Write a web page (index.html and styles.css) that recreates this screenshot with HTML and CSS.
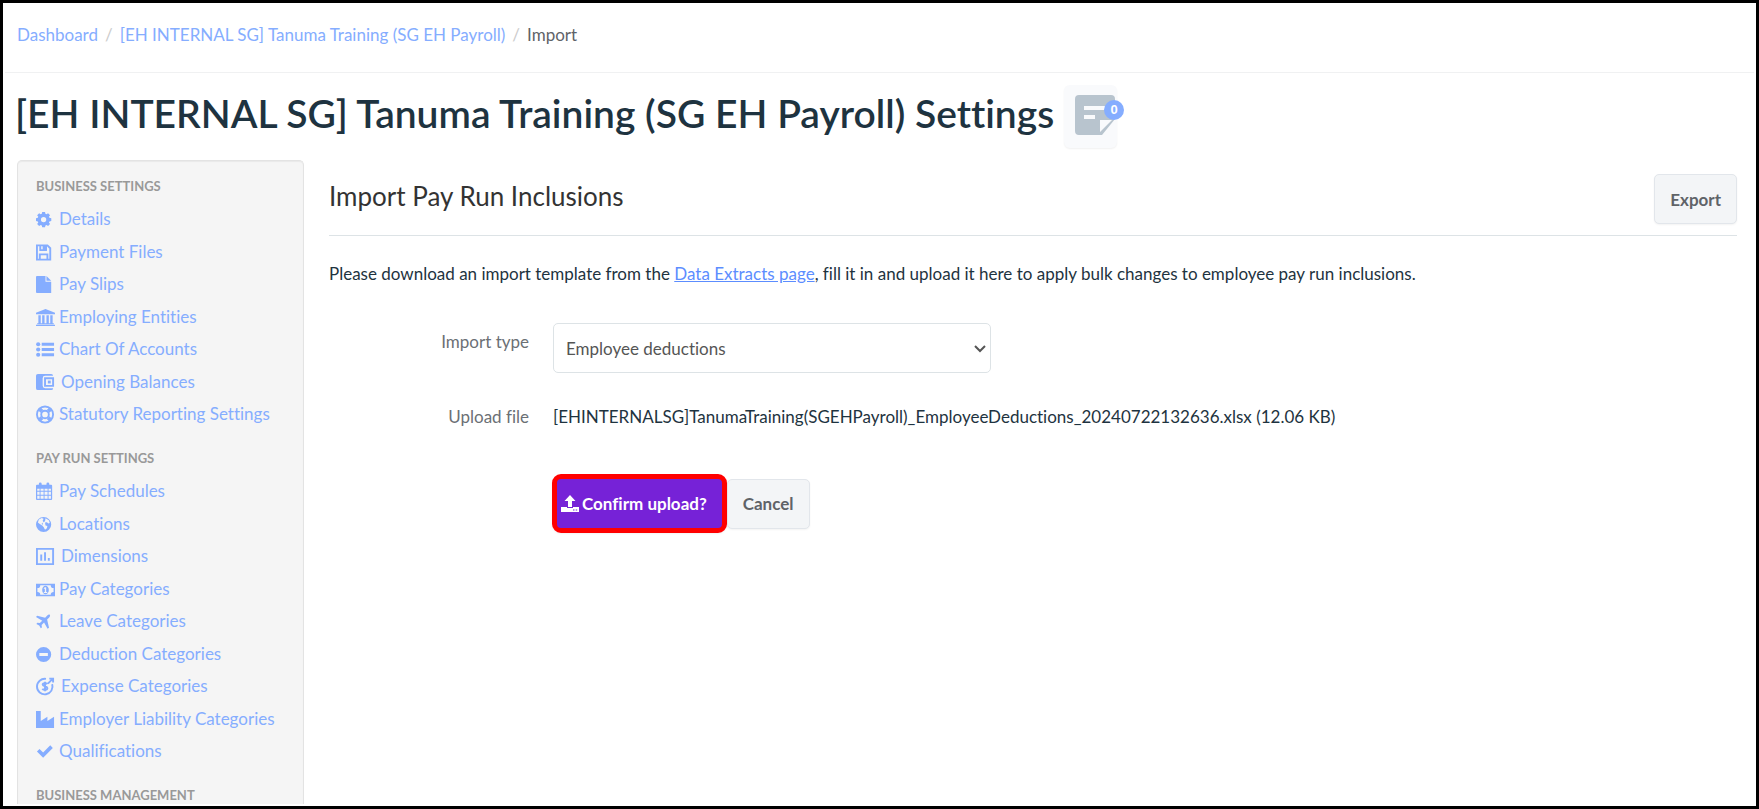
FILE: index.html
```html
<!DOCTYPE html>
<html lang="en">
<head>
    <meta charset="UTF-8">
    <meta name="viewport" content="width=device-width, initial-scale=1.0">
    <title>Import Pay Run Inclusions</title>
    <link rel="stylesheet" href="styles.css">
</head>
<body>
    <nav class="breadcrumb" aria-label="Breadcrumb">
        <a href="#">Dashboard</a>
        <span class="divider">/</span>
        <a href="#">[EH INTERNAL SG] Tanuma Training (SG EH Payroll)</a>
        <span class="divider">/</span>
        <span class="active">Import</span>
    </nav>

    <header class="page-header">
        <h1>[EH INTERNAL SG] Tanuma Training (SG EH Payroll) Settings</h1>
        <button type="button" class="notes-btn" aria-label="Notes">
            <svg viewBox="0 0 40 40"><path fill-rule="evenodd" d="M4 0h32a4 4 0 0 1 4 4v20L27 40H4a4 4 0 0 1-4-4V4a4 4 0 0 1 4-4zM9 11v4h22v-4zM9 20v4h11v-4zM25 25v12l12-12z"/></svg>
            <span class="notes-count">0</span>
        </button>
    </header>

    <div class="layout">
        <aside class="sidebar">
            <h2>Business Settings</h2>
            <ul>
                <li><a href="#"><svg class="icon" viewBox="0 0 20 20"><path fill-rule="evenodd" d="M6.500 2h3l.4 2 1.100.5 1.700-1.200 2.100 2.100-1.200 1.700.5 1.100 2 .4v3l-2 .4-.5 1.100 1.200 1.700-2.100 2.100-1.700-1.200-1.100.5-.4 2h-3l-.4-2-1.100-.5-1.700 1.200-2.100-2.100 1.200-1.700-.5-1.100-2-.4v-3l2-.4.5-1.100-1.200-1.700 2.100-2.100 1.700 1.200 1.100-.5zM8 7.300a2.800 2.800 0 1 0 0 5.600 2.800 2.800 0 0 0 0-5.600z"/></svg>Details</a></li>
                <li><a href="#"><svg class="icon line" viewBox="0 0 20 20"><path d="M1 2.500h11l3 3v12H1zM4 17v-5h8v5M4.500 3v4.500h6V3"/><path class="solid" d="M8 3h2.500v4H8z"/></svg>Payment Files</a></li>
                <li><a href="#"><svg class="icon" viewBox="0 0 20 20"><path d="M1 1h9v6h6v12H1a1 1 0 0 1-1-1V2a1 1 0 0 1 1-1zM11 1l5 5h-5z"/></svg>Pay Slips</a></li>
                <li><a href="#"><svg class="icon" viewBox="0 0 20 20"><path d="M10 1l10 4v1.500H0V5zM2.500 7.500H5V16h1.500V7.500H9V16h2V7.500h2.500V16H15V7.500h2.500V16h1.300v1H1.200v-1h1.300zM0 17.700h20V19H0z"/></svg>Employing Entities</a></li>
                <li><a href="#"><svg class="icon" viewBox="0 0 20 20"><circle cx="2.300" cy="4.500" r="2.200"/><circle cx="2.300" cy="10" r="2.200"/><circle cx="2.300" cy="15.500" r="2.200"/><path d="M6 3h13v3H6zM6 8.500h13v3H6zM6 14h13v3H6z"/></svg>Chart Of Accounts</a></li>
                <li class="wide"><a href="#"><svg class="icon" viewBox="0 0 20 20"><path d="M2 1h14a2 2 0 0 1 2 2H9.500A2.500 2.500 0 0 0 7 5.500v8A2.500 2.500 0 0 0 9.500 16H18a2 2 0 0 1-2 2H2a2 2 0 0 1-2-2V3a2 2 0 0 1 2-2z"/><path fill-rule="evenodd" d="M8.500 4.500H19v10H8.500zm2 2v6h6.500v-6z"/><path d="M12.500 8h3v3h-3z"/></svg>Opening Balances</a></li>
                <li><a href="#"><svg class="icon line" viewBox="0 0 20 20"><circle cx="9.500" cy="10" r="8.500"/><circle cx="9.500" cy="10" r="4"/><path class="thick" d="M3.800 4.300l2.500 2.500M15.200 4.300l-2.500 2.500M3.800 15.700l2.500-2.500M15.200 15.700l-2.500-2.500"/></svg>Statutory Reporting Settings</a></li>
            </ul>

            <h2>Pay Run Settings</h2>
            <ul>
                <li><a href="#"><svg class="icon" viewBox="0 0 20 20"><path fill-rule="evenodd" d="M1 3h2V2a1.500 1.500 0 0 1 3 0v1h5V2a1.500 1.500 0 0 1 3 0v1h2a1 1 0 0 1 1 1v14a1 1 0 0 1-1 1H1a1 1 0 0 1-1-1V4a1 1 0 0 1 1-1zm.3 4v2.300h2.500V7zm3.500 0v2.300h3.200V7zm4.200 0v2.300h3.200V7zm4.200 0v2.300h2.500V7zM1.300 10.300v3.200h2.500v-3.200zm3.500 0v3.200h3.200v-3.200zm4.200 0v3.200h3.200v-3.200zm4.200 0v3.200h2.500v-3.200zM1.300 14.500v3.200h2.500v-3.200zm3.500 0v3.200h3.200v-3.200zm4.200 0v3.200h3.200v-3.200zm4.200 0v3.200h2.500v-3.200z"/></svg>Pay Schedules</a></li>
                <li><a href="#"><svg class="icon" viewBox="0 0 20 20"><path fill-rule="evenodd" d="M8 2a8 8 0 1 0 0 16A8 8 0 0 0 8 2zM3 4.800l3-1.600 2 .8-1 2 1 1.500-2 1.500.5 2L4 9.500 2 8zM10 3.500l3.500 2 1 3-1.500.5-1.500-1.500-2 .5.5 3 2 .5-.5 2.500-2 1.500-1.500-3-1.500-1.500 1-3 2-1.500z"/></svg>Locations</a></li>
                <li class="wide"><a href="#"><svg class="icon line" viewBox="0 0 20 20"><path d="M1 2h17v16H1zM5.500 8v6.500M9.500 5.500v9M13.500 11.500v3"/></svg>Dimensions</a></li>
                <li><a href="#"><svg class="icon" viewBox="0 0 20 20"><path fill-rule="evenodd" d="M0 4h20v13H0zM4.500 5.500a3 3 0 0 1-3 3v4a3 3 0 0 1 3 3h11a3 3 0 0 1 3-3v-4a3 3 0 0 1-3-3zM10 6c2 0 3.500 2 3.500 4.500S12 15 10 15s-3.500-2-3.500-4.500S8 6 10 6zM9.300 7.500L8 8.700l.7.800.6-.5v3.500H8.200v1.100h3.600v-1.100h-1.100v-5z"/></svg>Pay Categories</a></li>
                <li><a href="#"><svg class="icon" viewBox="0 0 20 20"><path d="M14.500 3c.8.800 0 2.200-.8 3l-2 2 2 8.500-1.500 1.200-3.700-6.700-2.600 2.600.3 2.600-1.200 1-1.600-3-3-1.600 1-1.200 2.600.3 2.600-2.600L0 5.300 1.200 4l8.400 2 2-2c.8-.8 2.200-1.700 2.900-1z"/></svg>Leave Categories</a></li>
                <li><a href="#"><svg class="icon" viewBox="0 0 20 20"><path fill-rule="evenodd" d="M8 2a8 8 0 1 0 0 16A8 8 0 0 0 8 2zM3.500 8.500v3h9v-3z"/></svg>Deduction Categories</a></li>
                <li class="wide"><a href="#"><svg class="icon line" viewBox="0 0 20 20"><path d="M10.500 2A8.200 8.200 0 1 0 17 7.500M12.500 7l5-5M14 1.700h4v4M12 7.500C11 6 7 6 7 8s5 1.500 5 3.700-4 2.500-5.300.6M9.500 5v10"/></svg>Expense Categories</a></li>
                <li><a href="#"><svg class="icon" viewBox="0 0 20 20"><path d="M0 1h5v10.500L12 7v4.500L19 7v12H0z"/></svg>Employer Liability Categories</a></li>
                <li><a href="#"><svg class="icon" viewBox="0 0 20 20"><path d="M1 10l2.700-2.700L7.500 11 15 3.500 17.700 6.200 7.500 16.500z"/></svg>Qualifications</a></li>
            </ul>

            <h2>Business Management</h2>
        </aside>

        <main class="content">
            <div class="content-header">
                <h3>Import Pay Run Inclusions</h3>
                <button type="button" class="btn">Export</button>
            </div>

            <p>Please download an import template from the <a href="#">Data Extracts page</a>, fill it in and upload it here to apply bulk changes to employee pay run inclusions.</p>

            <form>
                <div class="control-group">
                    <label for="importType">Import type</label>
                    <div class="select-wrap">
                        <select id="importType">
                            <option>Employee deductions</option>
                        </select>
                        <svg viewBox="0 0 12 8"><path d="M1 1l5 5 5-5"/></svg>
                    </div>
                </div>
                <div class="control-group file">
                    <span class="label">Upload file</span>
                    <span>[EHINTERNALSG]TanumaTraining(SGEHPayroll)_EmployeeDeductions_20240722132636.xlsx (12.06 KB)</span>
                </div>
                <div class="actions">
                    <button type="button" class="btn btn-primary"><svg viewBox="0 0 18 18"><path fill-rule="evenodd" d="M9 0l5.500 6H11v6H7V6H3.500zM0 12h6v1h6v-1h6v5H0zm12 2.500v1h1.500v-1zm2.700 0v1h1.500v-1z"/></svg>Confirm upload?</button>
                    <button type="button" class="btn">Cancel</button>
                </div>
            </form>
        </main>
    </div>
</body>
</html>
```
FILE: styles.css
```css
:root {
    --link: #85adff;
    --link-strong: #5c8dff;
    --text: #1e3340;
    --muted: #5f6368;
    --border: #dde3e6;
    --primary: #7622d7;
}

* {
    margin: 0;
    padding: 0;
    box-sizing: border-box;
}

body {
    display: flex;
    flex-direction: column;
    height: 100vh;
    padding: 2px;
    border: 3px solid #000;
    overflow: hidden;
    background: #fff;
    color: var(--text);
    font-family: Lato, "Open Sans", sans-serif;
    font-size: 17px;
    font-variant-ligatures: none;
    line-height: 24px;
}

a {
    color: var(--link);
    text-decoration: none;
}

.breadcrumb {
    display: flex;
    gap: 7px;
    flex-shrink: 0;
    padding: 18px 12px 25px;
    border-bottom: 1px solid #f0f1f2;
}

.breadcrumb .divider {
    color: #ccc;
}

.breadcrumb .active {
    color: var(--muted);
}

.page-header {
    display: flex;
    align-items: flex-start;
    gap: 10px;
    flex-shrink: 0;
    padding: 12px 10px;
}

.page-header h1 {
    font-size: 39px;
    line-height: 56px;
    font-weight: 600;
}

.notes-btn {
    position: relative;
    width: 53px;
    height: 63px;
    border: none;
    border-radius: 6px;
    background: #f9fafc;
    box-shadow: 0 1px 2px rgba(0, 0, 0, 0.06);
}

.notes-btn svg {
    display: block;
    width: 40px;
    height: 40px;
    margin: 0 0 4px 11px;
    fill: #b8c4ce;
}

.notes-count {
    position: absolute;
    top: 15px;
    right: -7px;
    width: 20px;
    height: 20px;
    border-radius: 50%;
    background: var(--link);
    color: #fff;
    font-size: 13px;
    line-height: 20px;
    font-weight: 700;
}

.layout {
    display: grid;
    grid-template-columns: 287px 1fr;
    gap: 25px;
    flex: 1;
    min-height: 0;
    padding: 0 17px 0 12px;
}

.sidebar {
    padding: 12px 18px;
    border: 1px solid #e3e3e3;
    border-bottom: none;
    border-radius: 5px 5px 0 0;
    background: #f5f5f5;
    box-shadow: inset 0 1px 1px rgba(0, 0, 0, 0.05);
    overflow: hidden;
}

.sidebar h2 {
    color: #999;
    font-size: 13px;
    line-height: 26px;
    font-weight: 700;
    text-transform: uppercase;
    white-space: nowrap;
}

.sidebar ul {
    margin: 4px 0 14px;
    list-style: none;
}

.sidebar li {
    height: 33px;
    white-space: nowrap;
}

.sidebar li:nth-child(even) {
    height: 32px;
}

.sidebar li a {
    display: flex;
    align-items: center;
    gap: 4px;
    height: 32px;
}

.sidebar .wide a {
    gap: 6px;
}

.icon {
    width: 19px;
    height: 19px;
    fill: var(--link);
}

.icon.line {
    fill: none;
    stroke: var(--link);
    stroke-width: 2;
}

.icon .solid {
    fill: var(--link);
}

.icon .thick {
    stroke-width: 4;
}

.content {
    min-width: 0;
}

.content-header {
    display: flex;
    justify-content: space-between;
    padding: 14px 0 11px;
    border-bottom: 1px solid var(--border);
}

.content-header h3 {
    color: #333;
    font-size: 26px;
    line-height: 44px;
    font-weight: 400;
}

.content p {
    margin: 26px 0 37px;
}

.content p a {
    color: var(--link-strong);
    text-decoration: underline;
}

.btn {
    height: 50px;
    padding: 0 15px;
    border: 1px solid #e2e6eb;
    border-radius: 5px;
    background: #f3f5f7;
    box-shadow: 0 1px 2px rgba(0, 0, 0, 0.05);
    color: var(--muted);
    font-family: inherit;
    font-size: 17px;
    font-variant-ligatures: none;
    font-weight: 700;
    cursor: pointer;
}

.control-group {
    display: flex;
    gap: 24px;
}

.control-group label,
.control-group .label {
    width: 200px;
    padding-top: 7px;
    color: #6b7075;
    text-align: right;
}

.control-group.file {
    align-items: center;
    margin: 32px 0 45px;
}

.control-group.file .label {
    padding-top: 0;
}

.select-wrap {
    position: relative;
    width: 438px;
}

.select-wrap select {
    width: 100%;
    height: 50px;
    padding: 0 12px;
    border: 1px solid var(--border);
    border-radius: 5px;
    appearance: none;
    background: #fff;
    color: #555;
    font-family: inherit;
    font-size: 17px;
    font-variant-ligatures: none;
}

.select-wrap svg {
    position: absolute;
    top: 22px;
    right: 5px;
    width: 12px;
    height: 8px;
    fill: none;
    stroke: #555;
    stroke-width: 2;
    pointer-events: none;
}

.actions {
    display: flex;
    align-items: center;
    padding-left: 223px;
}

.btn-primary {
    display: flex;
    align-items: center;
    gap: 3px;
    height: 59px;
    padding: 0 15px 0 4px;
    border: 5px solid #f00;
    border-radius: 9px;
    background: var(--primary);
    color: #fff;
}

.btn-primary svg {
    width: 18px;
    height: 18px;
    fill: #fff;
}
```
